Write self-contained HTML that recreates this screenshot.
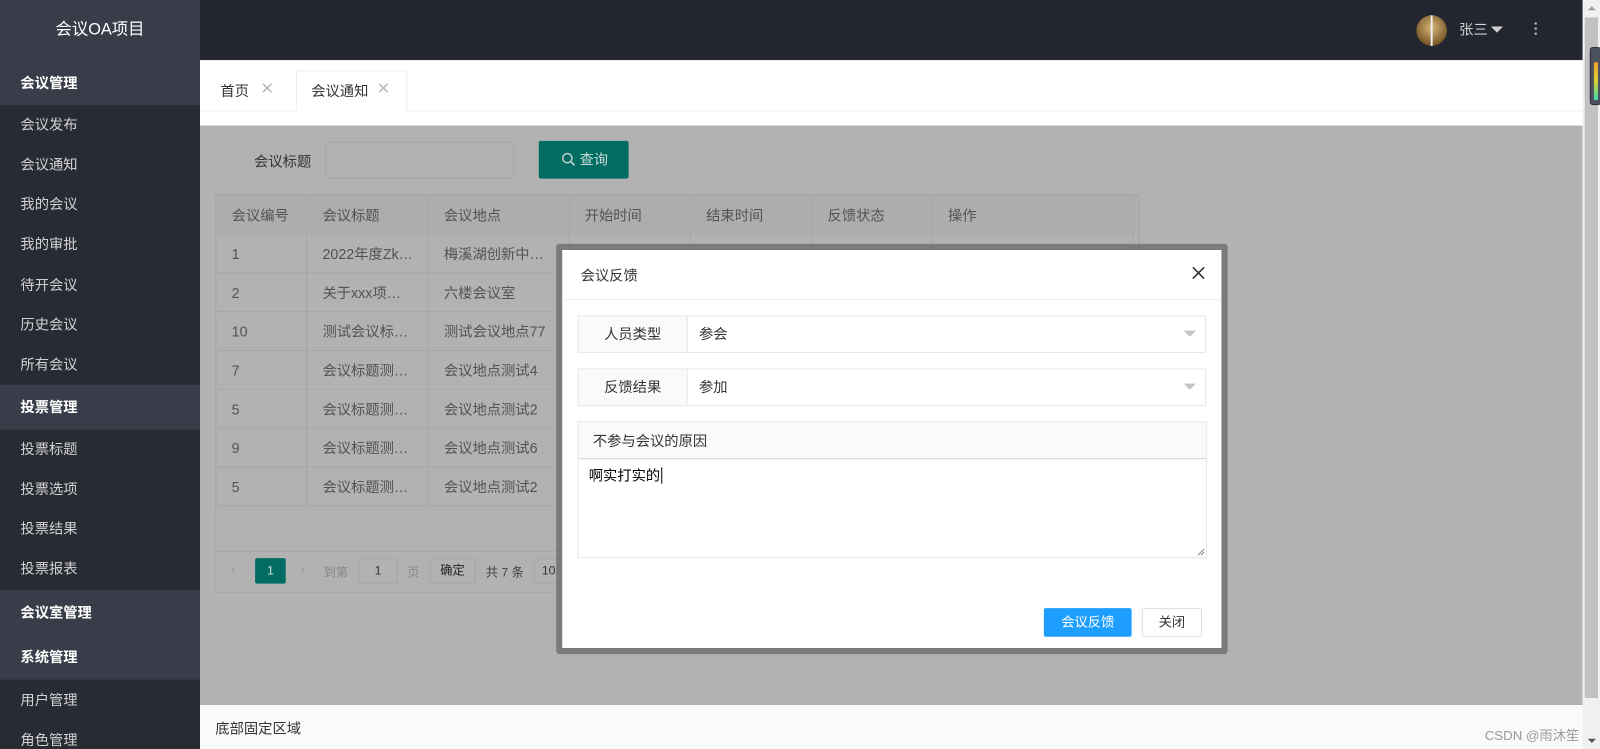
<!DOCTYPE html>
<html><head><meta charset="utf-8"><style>
*{margin:0;padding:0;box-sizing:border-box}
html,body{width:1600px;height:749px;overflow:hidden;background:#fff}
body{font-family:"Liberation Sans","Noto Sans CJK SC",sans-serif;font-size:14px;color:#333;position:relative}
#wrap{position:absolute;left:0;top:0;width:1568px;height:734px;transform:scale(1.020408);transform-origin:0 0;overflow:hidden;background:#fff}
.abs{position:absolute}
#side{left:0;top:0;width:196px;height:734px;background:#282b33}
#logo{left:0;top:0;width:196px;height:59px;background:#393d49;color:#fff;font-size:16px;text-align:center;line-height:59px}
.gh{position:absolute;left:0;width:196px;height:44px;background:#393d49;color:#fff;line-height:44px;padding-left:20px;font-weight:bold;font-size:14px}
.it{position:absolute;left:20px;color:#d2d2d2;font-size:14px;line-height:20px}
#head{left:196px;top:0;width:1355px;height:59px;background:#23262e}
#tabs{left:196px;top:59px;width:1355px;height:64px;background:#fff}
#gray{left:196px;top:123px;width:1355px;height:568px;background:#b2b2b2}
#foot{left:196px;top:691px;width:1355px;height:43px;background:#fafafa}
#sb{left:1551px;top:0;width:17px;height:734px;background:#f0f0f0}
table{border-collapse:collapse;position:absolute;left:211px;top:191px;color:#535353}
td{border:1px solid #a7a7a7;height:38px;padding-left:15px;font-size:14px;white-space:nowrap}
.th td{background:#adadad}
.modal{left:545px;top:239px;width:658px;height:402px;background:#7b7b7b;border-radius:3px}
.mi{left:551px;top:245px;width:646px;height:390px;background:#fff}
.frow{position:absolute;left:15px;width:616px;height:37px;border:1px solid #e6e6e6}
.lab{position:absolute;left:0;top:0;width:107px;height:35px;background:#fafafa;border-right:1px solid #e6e6e6;text-align:center;line-height:35px}
.val{position:absolute;left:118px;top:0;line-height:35px}
.tri{position:absolute;right:9px;top:14px;width:0;height:0;border-left:6px solid transparent;border-right:6px solid transparent;border-top:6px solid #c2c2c2}
</style></head><body><div id="wrap">
<div id="side" class="abs">
<div id="logo" class="abs">会议OA项目</div>
<div class="gh" style="top:59px">会议管理</div>
<div class="it" style="top:112px">会议发布</div>
<div class="it" style="top:151px">会议通知</div>
<div class="it" style="top:190px">我的会议</div>
<div class="it" style="top:229px">我的审批</div>
<div class="it" style="top:269px">待开会议</div>
<div class="it" style="top:308px">历史会议</div>
<div class="it" style="top:347px">所有会议</div>
<div class="gh" style="top:377px">投票管理</div>
<div class="it" style="top:430px">投票标题</div>
<div class="it" style="top:469px">投票选项</div>
<div class="it" style="top:508px">投票结果</div>
<div class="it" style="top:547px">投票报表</div>
<div class="gh" style="top:578px">会议室管理</div>
<div class="gh" style="top:622px">系统管理</div>
<div class="it" style="top:676px">用户管理</div>
<div class="it" style="top:715px">角色管理</div>
</div>
<div id="head" class="abs">
<div class="abs" style="left:1192px;top:15px;width:30px;height:30px;border-radius:50%;background:radial-gradient(circle at 50% 40%,#d8b67a,#7a5a2a 70%,#3a2a15)"></div>
<div class="abs" style="left:1206px;top:15px;width:2px;height:30px;background:#eee"></div>
<div class="abs" style="left:1234px;top:19px;color:#d2d2d2;font-size:14px">张三</div>
<div class="abs" style="left:1265px;top:26px;border-left:6px solid transparent;border-right:6px solid transparent;border-top:6px solid #d2d2d2"></div>
<div class="abs" style="left:1308px;top:22px;width:2px;height:12px;border-top:2px solid #ccc;border-bottom:2px solid #ccc"><div style="margin-top:3px;height:2px;background:#ccc"></div></div>
</div>
<div id="tabs" class="abs">
<div class="abs" style="left:0;top:49px;width:1355px;height:1px;background:#eee"></div>
<div class="abs" style="left:20px;top:20px;color:#333">首页</div>
<div class="abs" style="left:59px;top:18px;color:#bbb;font-size:16px">✕</div>
<div class="abs" style="left:94px;top:10px;width:109px;height:40px;background:#fff;border:1px solid #eee;border-bottom:none"></div>
<div class="abs" style="left:109px;top:20px;color:#333">会议通知</div>
<div class="abs" style="left:173px;top:18px;color:#bbb;font-size:16px">✕</div>
</div>
<div id="gray" class="abs">
<div class="abs" style="left:53px;top:25px;color:#333">会议标题</div>
<div class="abs" style="left:123px;top:16px;width:185px;height:36px;border:1px solid #a7a7a7;border-radius:2px"></div>
<div class="abs" style="left:332px;top:15px;width:88px;height:37px;background:#006c62;border-radius:2px;color:#c9d9d6;line-height:37px;padding-left:22px"><svg width="14" height="14" viewBox="0 0 14 14" style="vertical-align:-2px"><circle cx="6" cy="6" r="4.5" fill="none" stroke="#b7c9c5" stroke-width="1.5"/><path d="M9.3 9.3L13 13" stroke="#b7c9c5" stroke-width="1.8"/></svg> 查询</div>
<div class="abs" style="left:15px;top:67px;width:905px;height:391px;border:1px solid #a7a7a7"></div>
<div class="abs" style="left:15px;top:417px;width:905px;height:1px;background:#a7a7a7"></div>
<div class="abs" style="left:30px;top:427px;color:#999;font-size:16px">‹</div>
<div class="abs" style="left:54px;top:424px;width:30px;height:25px;background:#006c62;color:#d0e0dc;text-align:center;line-height:25px;font-size:12px;border-radius:2px">1</div>
<div class="abs" style="left:98px;top:427px;color:#999;font-size:16px">›</div>
<div class="abs" style="left:121px;top:429px;color:#888;font-size:12px">到第</div>
<div class="abs" style="left:155px;top:424px;width:39px;height:25px;border:1px solid #a7a7a7;text-align:center;line-height:23px;font-size:12px">1</div>
<div class="abs" style="left:203px;top:429px;color:#888;font-size:12px">页</div>
<div class="abs" style="left:225px;top:424px;width:45px;height:25px;border:1px solid #a7a7a7;text-align:center;line-height:23px;font-size:12px;color:#222">确定</div>
<div class="abs" style="left:280px;top:429px;color:#444;font-size:12px">共 7 条</div>
<div class="abs" style="left:327px;top:424px;width:30px;height:25px;border:1px solid #a7a7a7;line-height:23px;font-size:12px;padding-left:7px;color:#333">10</div>
</div>
<table>
<tr class="th"><td style="width:89px">会议编号</td><td style="width:119px">会议标题</td><td style="width:138px">会议地点</td><td style="width:119px">开始时间</td><td style="width:119px">结束时间</td><td style="width:118px">反馈状态</td><td style="width:197px">操作</td><td style="width:6px;padding:0"></td></tr>
<tr><td>1</td><td>2022年度Zk…</td><td>梅溪湖创新中…</td><td></td><td></td><td></td><td><span style="display:inline-block;width:58px;height:14px;background:#006055;margin-top:10px"></span></td><td style="padding:0"></td></tr>
<tr><td>2</td><td>关于xxx项…</td><td>六楼会议室</td><td></td><td></td><td></td><td></td><td style="padding:0"></td></tr>
<tr><td>10</td><td>测试会议标…</td><td>测试会议地点77</td><td></td><td></td><td></td><td></td><td style="padding:0"></td></tr>
<tr><td>7</td><td>会议标题测…</td><td>会议地点测试4</td><td></td><td></td><td></td><td></td><td style="padding:0"></td></tr>
<tr><td>5</td><td>会议标题测…</td><td>会议地点测试2</td><td></td><td></td><td></td><td></td><td style="padding:0"></td></tr>
<tr><td>9</td><td>会议标题测…</td><td>会议地点测试6</td><td></td><td></td><td></td><td></td><td style="padding:0"></td></tr>
<tr><td>5</td><td>会议标题测…</td><td>会议地点测试2</td><td></td><td></td><td></td><td></td><td style="padding:0"></td></tr>
</table>
<div class="abs modal"></div>
<div class="abs mi">
<div class="abs" style="left:18px;top:15px;color:#333;font-size:14px">会议反馈</div>
<svg class="abs" style="left:617px;top:16px" width="13" height="13" viewBox="0 0 13 13"><path d="M1 1L12 12M12 1L1 12" stroke="#333" stroke-width="1.6"/></svg>
<div class="abs" style="left:0;top:48px;width:646px;height:1px;background:#eee"></div>
<div class="frow" style="top:64px"><div class="lab">人员类型</div><div class="val">参会</div><div class="tri"></div></div>
<div class="frow" style="top:116px"><div class="lab">反馈结果</div><div class="val">参加</div><div class="tri"></div></div>
<div class="abs" style="left:15px;top:168px;width:617px;height:134px;border:1px solid #e6e6e6">
<div style="height:36px;background:#fafafa;border-bottom:1px solid #d2d2d2;line-height:36px;padding-left:14px">不参与会议的原因</div>
<div style="padding:6px 10px;color:#000">啊实打实的<span style="border-left:1px solid #000;margin-left:1px"></span></div>
<svg class="abs" style="right:1px;bottom:1px" width="8" height="8"><path d="M7 1L1 7M7 4L4 7" stroke="#888"/></svg>
</div>
<div class="abs" style="left:472px;top:351px;width:86px;height:28px;background:#1e9fff;color:#fff;border-radius:2px;text-align:center;line-height:28px;font-size:13px">会议反馈</div>
<div class="abs" style="left:568px;top:351px;width:59px;height:28px;border:1px solid #dedede;border-radius:2px;text-align:center;line-height:26px;font-size:13px;color:#333">关闭</div>
</div>
<div id="foot" class="abs"><div class="abs" style="left:15px;top:13px;color:#333;font-size:14px">底部固定区域</div>
<div class="abs" style="left:1259px;top:19px;color:#999;font-size:13px">CSDN @雨沐笙</div></div>
<div id="sb" class="abs">
<div class="abs" style="left:2px;top:17px;width:13px;height:667px;background:#c1c1c1"></div>
<div class="abs" style="left:5px;top:6px;border-left:4px solid transparent;border-right:4px solid transparent;border-bottom:4px solid #a0a0a0"></div>
<div class="abs" style="left:7px;top:46px;width:11px;height:57px;background:#4a505c;border-radius:3px;border:1px solid #2b2f36"></div>
<div class="abs" style="left:11px;top:61px;width:4px;height:37px;background:linear-gradient(#f0a030,#d8d030,#40d8b0)"></div>
<div class="abs" style="left:5px;top:724px;border-left:4px solid transparent;border-right:4px solid transparent;border-top:4px solid #505050"></div>
</div>
</div></body></html>
